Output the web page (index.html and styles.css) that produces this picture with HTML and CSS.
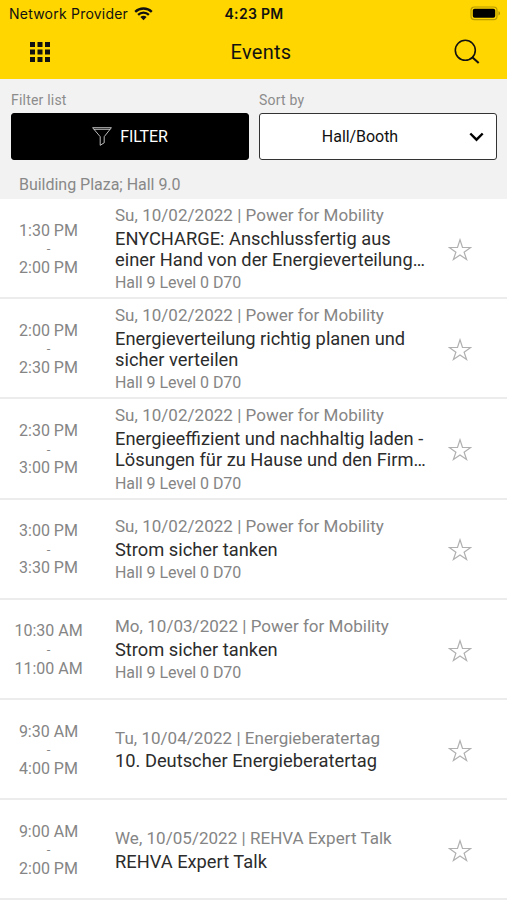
FILE: index.html
```html
<!DOCTYPE html>
<html lang="en">
<head>
<meta charset="utf-8">
<title>Events</title>
<link rel="stylesheet" href="styles.css">
</head>
<body>
<svg class="defs" width="0" height="0">
  <symbol id="star" viewBox="0 0 24 24"><path d="M12 1.800 14.500 9.500H22.600L16.100 14.200 18.600 21.500 12 17 5.400 21.500 7.900 14.200 1.400 9.500H9.500Z" fill="none" stroke="#b0b0b0" stroke-width="1.200"/></symbol>
</svg>
<header class="top">
  <div class="status">
    <div class="carrier"><span>Network Provider</span>
      <svg width="19" height="14" viewBox="0 0 19 14"><path d="M1.200 4.900a11.800 11.800 0 0 1 16.600 0M4.100 7.900a7.700 7.700 0 0 1 10.800 0" fill="none" stroke="#111" stroke-width="2.300"/><path d="M6.400 10.100a4.400 4.400 0 0 1 6.200 0L9.500 13.300Z" fill="#111"/></svg>
    </div>
    <div class="clock">4:23 PM</div>
    <svg class="battery" width="31" height="15" viewBox="0 0 31 15"><rect x="1" y="1" width="26" height="12.600" rx="3.400" fill="none" stroke="#b89c00" stroke-width="1.200"/><rect x="2.800" y="2.800" width="22.400" height="9" rx="1.800" fill="#000"/><path d="M28.500 5.200c2 .7 2 3.500 0 4.200Z" fill="#a98f00"/></svg>
  </div>
  <div class="nav">
    <svg class="grid-icon" width="20" height="20" viewBox="0 0 20 20"><path d="M0 0h5v5H0zM7.500 0h5v5h-5zM15 0h5v5h-5zM0 7.500h5v5H0zM7.500 7.500h5v5h-5zM15 7.500h5v5h-5zM0 15h5v5H0zM7.500 15h5v5h-5zM15 15h5v5h-5z" fill="#111"/></svg>
    <h1>Events</h1>
    <svg class="search-icon" width="26" height="26" viewBox="0 0 26 26"><circle cx="11.300" cy="11.300" r="10" fill="none" stroke="#111" stroke-width="1.600"/><path d="M18 18 24.700 24" stroke="#111" stroke-width="2.100"/></svg>
  </div>
</header>
<section class="controls">
  <div class="field"><span class="label">Filter list</span>
    <div class="button"><svg width="20" height="19" viewBox="0 0 20 19"><path d="M.6.7H19.400L12.200 9.700V15.800L8.200 18.300V9.700L.6.7M1.800 2.300H18.200" fill="none" stroke="#ddd" stroke-width=".85"/></svg><span>FILTER</span></div>
  </div>
  <div class="field"><span class="label">Sort by</span>
    <div class="select"><span>Hall/Booth</span><svg width="15" height="10" viewBox="0 0 15 10"><path d="M1.300 1.500 7.500 7.700 13.700 1.500" fill="none" stroke="#000" stroke-width="2.400"/></svg></div>
  </div>
</section>
<div class="group">Building Plaza; Hall 9.0</div>
<main class="list">
  <article class="row"><div class="time">1:30 PM<small>-</small>2:00 PM</div><div class="info"><div class="date">Su, 10/02/2022 | Power for Mobility</div><div class="title">ENYCHARGE: Anschlussfertig aus<br>einer Hand von der Energieverteilung…</div><div class="place">Hall 9 Level 0 D70</div></div><svg class="star"><use href="#star"/></svg></article>
  <article class="row"><div class="time">2:00 PM<small>-</small>2:30 PM</div><div class="info"><div class="date">Su, 10/02/2022 | Power for Mobility</div><div class="title">Energieverteilung richtig planen und<br>sicher verteilen</div><div class="place">Hall 9 Level 0 D70</div></div><svg class="star"><use href="#star"/></svg></article>
  <article class="row"><div class="time">2:30 PM<small>-</small>3:00 PM</div><div class="info"><div class="date">Su, 10/02/2022 | Power for Mobility</div><div class="title">Energieeffizient und nachhaltig laden -<br>Lösungen für zu Hause und den Firm…</div><div class="place">Hall 9 Level 0 D70</div></div><svg class="star"><use href="#star"/></svg></article>
  <article class="row"><div class="time">3:00 PM<small>-</small>3:30 PM</div><div class="info"><div class="date">Su, 10/02/2022 | Power for Mobility</div><div class="title">Strom sicher tanken</div><div class="place">Hall 9 Level 0 D70</div></div><svg class="star"><use href="#star"/></svg></article>
  <article class="row"><div class="time">10:30 AM<small>-</small>11:00 AM</div><div class="info"><div class="date">Mo, 10/03/2022 | Power for Mobility</div><div class="title">Strom sicher tanken</div><div class="place">Hall 9 Level 0 D70</div></div><svg class="star"><use href="#star"/></svg></article>
  <article class="row"><div class="time">9:30 AM<small>-</small>4:00 PM</div><div class="info"><div class="date">Tu, 10/04/2022 | Energieberatertag</div><div class="title">10. Deutscher Energieberatertag</div></div><svg class="star"><use href="#star"/></svg></article>
  <article class="row"><div class="time">9:00 AM<small>-</small>2:00 PM</div><div class="info"><div class="date">We, 10/05/2022 | REHVA Expert Talk</div><div class="title">REHVA Expert Talk</div></div><svg class="star"><use href="#star"/></svg></article>
</main>
</body>
</html>
```
FILE: styles.css
```css
* { box-sizing: border-box; }
body { margin: 0; height: 900px; overflow: hidden; background: #fff; font-family: Roboto, sans-serif; color: #222; }
.defs { display: block; }
svg { display: block; flex: none; }
.top { height: 79px; background: #ffd600; color: #111; }
.status { height: 27px; display: grid; grid-template-columns: 1fr auto 1fr; align-items: center; padding: 0 6px 0 9px; font-family: Inter, sans-serif; font-size: 14px; }
.carrier { display: flex; align-items: center; gap: 6px; letter-spacing: .22px; white-space: nowrap; }
.clock { font-weight: 600; font-size: 14px; letter-spacing: .3px; position: relative; left: -1px; }
.battery { justify-self: end; }
.nav { height: 50px; display: grid; grid-template-columns: 60px 1fr 60px; align-items: center; }
.grid-icon { margin-left: 30px; }
.search-icon { margin-left: 7px; }
.nav h1 { margin: 0; padding-left: 15px; text-align: center; font-weight: 400; font-size: 20px; letter-spacing: .3px; }
.controls { height: 81px; padding: 11px 10px 0 11px; background: #f2f2f2; display: grid; grid-template-columns: 1fr 1fr; gap: 10px; }
.label { display: block; height: 23px; line-height: 20px; font-size: 14px; letter-spacing: .2px; color: #8c8c8c; }
.button, .select { height: 47px; border: 1.500px solid #333; border-radius: 3px; display: flex; align-items: center; font-size: 16px; }
.button { background: #000; border-color: #000; color: #fff; justify-content: center; gap: 8px; letter-spacing: -.15px; }
.select { background: #fff; color: #111; padding: 0 12px 0 0; }
.select span { flex: 1; text-align: center; padding-right: 9px; letter-spacing: -.05px; }
.group { height: 39px; background: #f2f2f2; color: #888; font-size: 16px; line-height: 49px; padding-left: 19px; letter-spacing: -.02px; }
.row { height: 100.200px; display: grid; grid-template-columns: 97px 313px 1fr; align-items: center; border-bottom: 2px solid #ececec; }
.time { font-size: 16px; line-height: 18.600px; padding-top: 3px; text-align: center; color: #858585; }
.time small { display: block; height: 18.600px; font-size: 13px; line-height: 17px; }
.info { padding: 1px 0 0 18px; white-space: nowrap; }
.date { font-size: 17px; line-height: 21px; margin-bottom: 1.800px; color: #858585; letter-spacing: .03px; }
.title { font-size: 18.300px; line-height: 21.200px; color: #2c2c2c; }
.place { font-size: 16px; line-height: 19px; margin-top: 3.200px; color: #858585; letter-spacing: -.06px; }
.star { width: 24px; height: 24px; margin: 3.500px 0 0 38px; }
```
